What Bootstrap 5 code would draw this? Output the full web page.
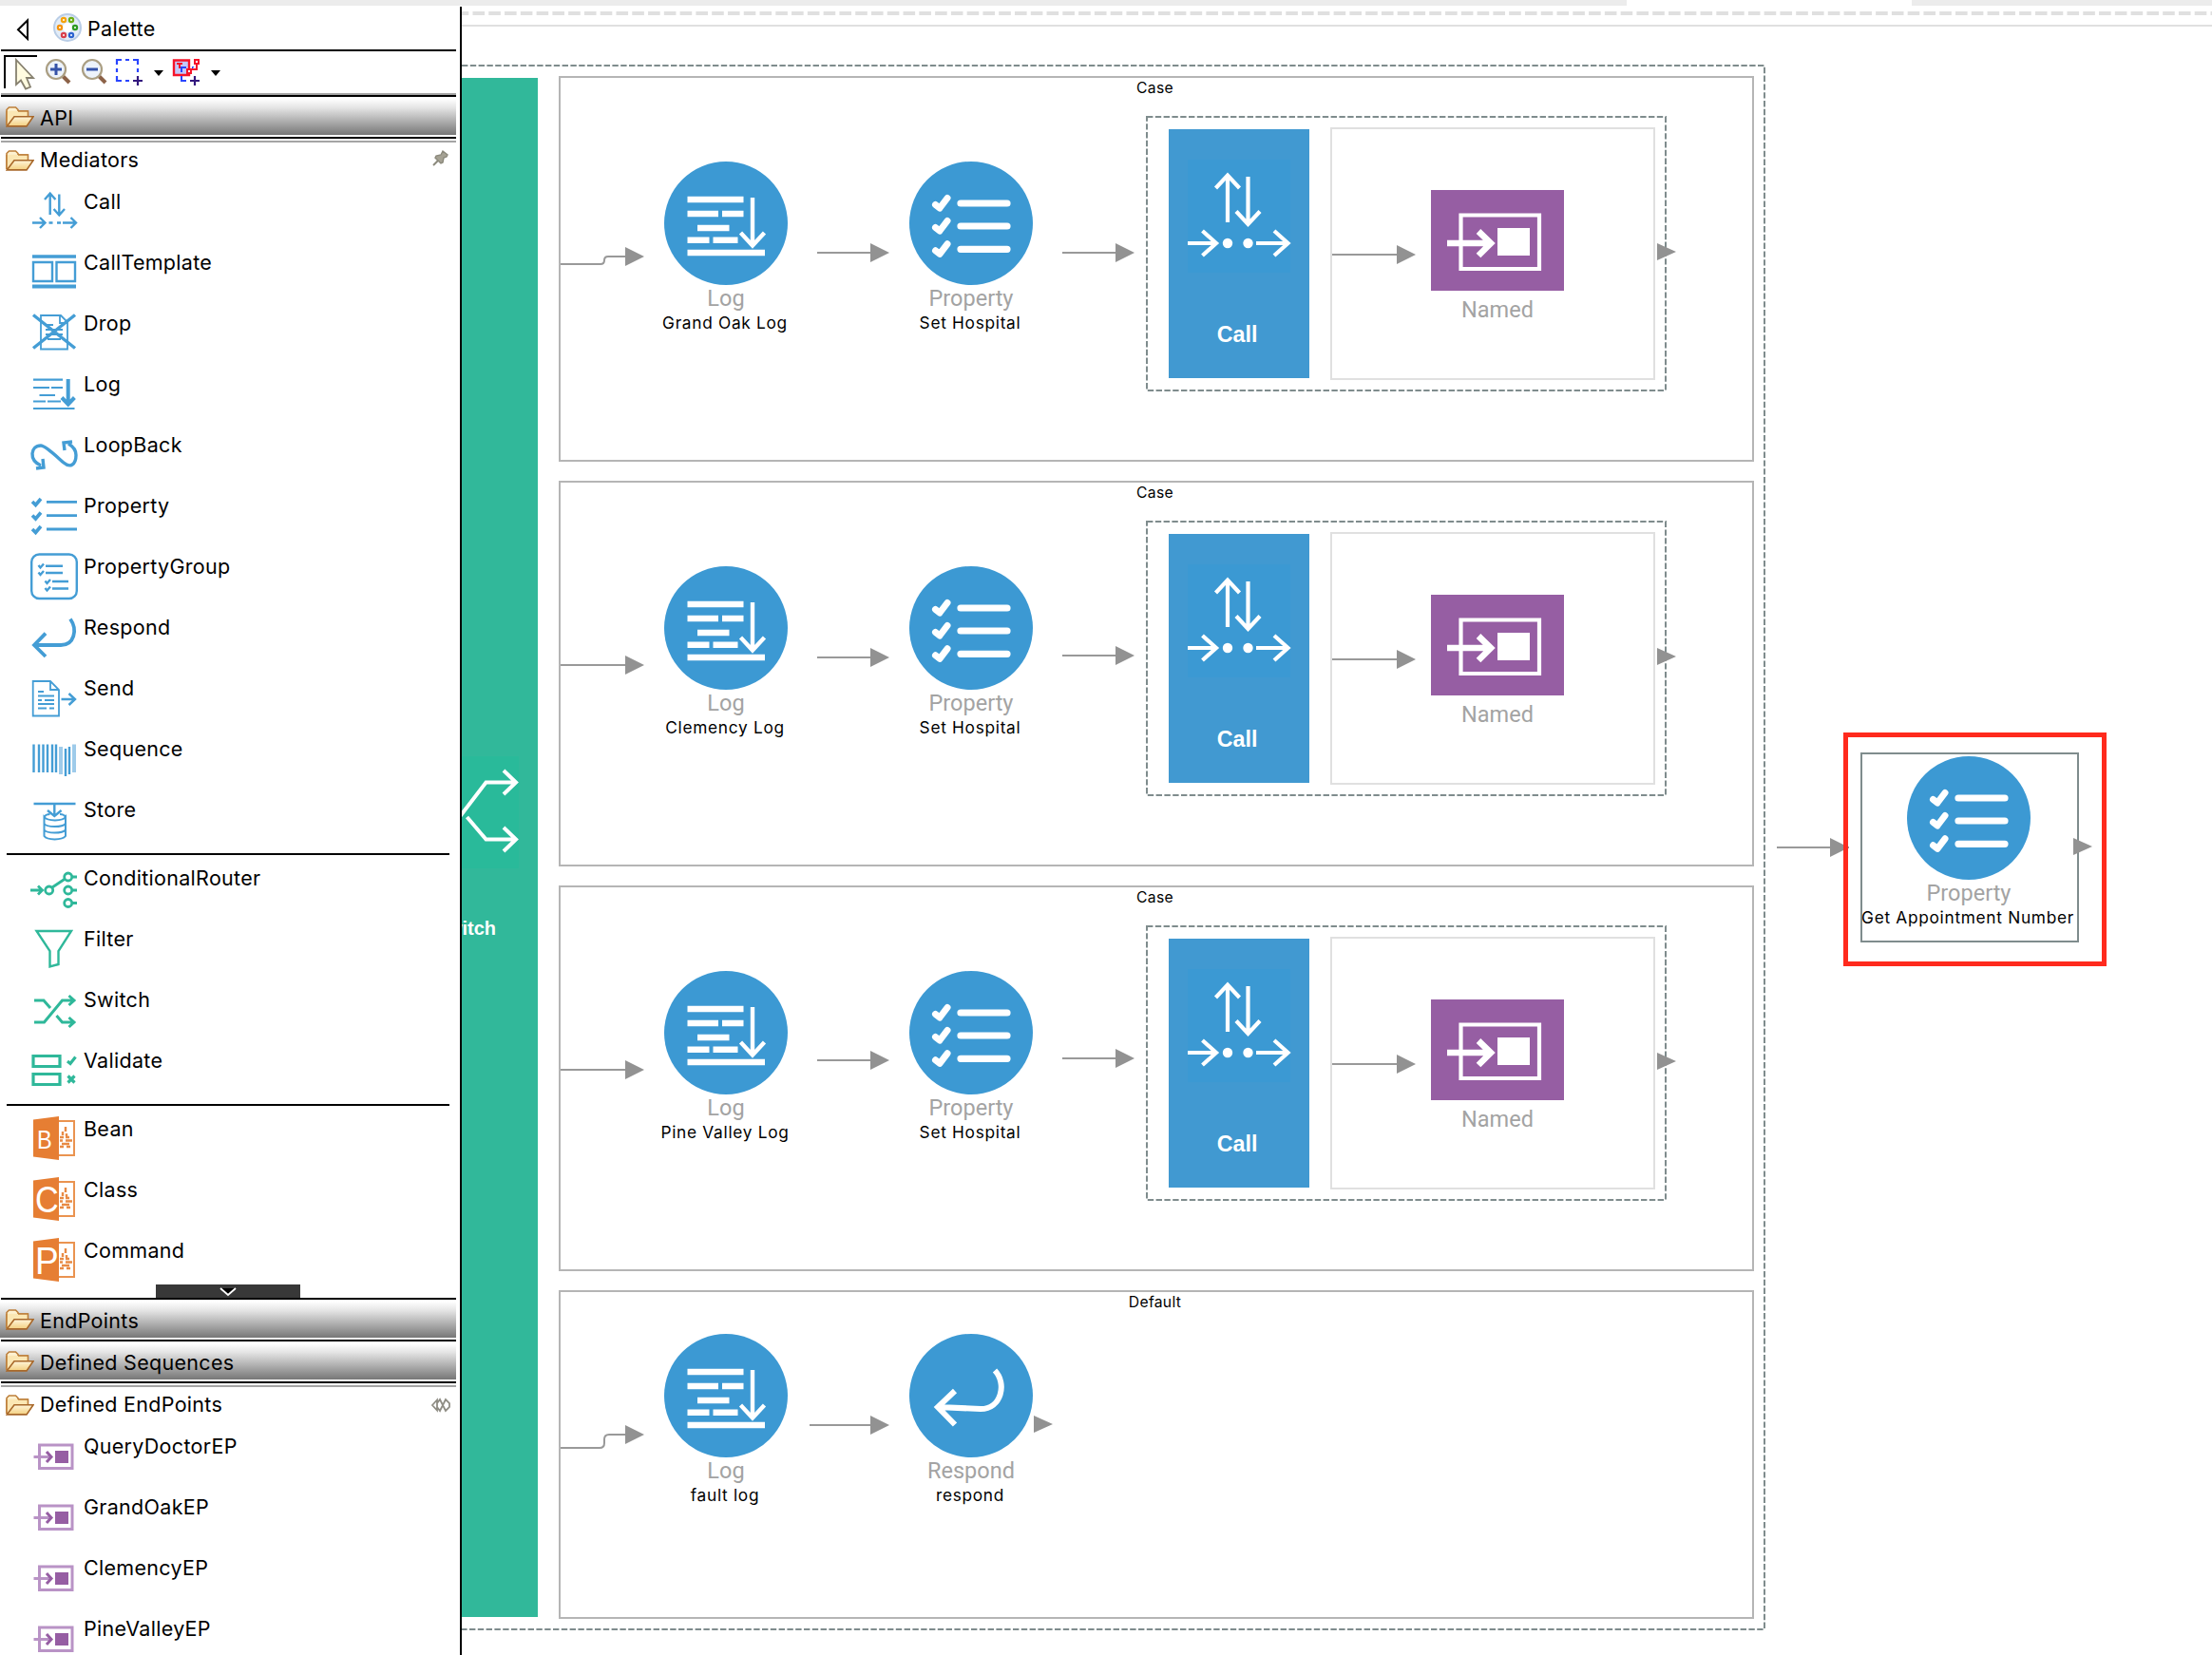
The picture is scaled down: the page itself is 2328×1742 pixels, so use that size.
<!DOCTYPE html>
<html lang="en">
<head>
<meta charset="utf-8">
<title>Mediation flow editor</title>
<link href="https://cdn.jsdelivr.net/npm/bootstrap@5.3.0/dist/css/bootstrap.min.css" rel="stylesheet">
<style>
body{width:2328px;height:1742px;overflow:hidden;background:#fff;color:#000;font-family:Inter,"Liberation Sans",sans-serif}
svg{display:block;flex:none;overflow:visible}
.top-strip{height:6px;flex:none}
.strip-a{width:1712px;background:#ececec}.strip-b{width:316px;background:#ececec}
.palette{width:486px;border-right:2px solid #000;background:#fff;font-size:21.5px;line-height:26px;letter-spacing:.3px;z-index:3;flex:none;margin-top:1px}
.pal-inner{width:480px}
.pal-title{height:45px;padding-left:0}
.rule-k{height:2px;background:#000;margin-left:1px;flex:none}
.rule-g{height:2px;background:#a5a5a5;margin-left:1px;flex:none}
.rule-k + .rule-g{margin-top:2px}
.tools{height:44px}
.drawer-bar{height:38px;margin:2px 0;background:linear-gradient(#fff,#e4e4e4 25%,#777);padding-left:6px}
.drawer-head{height:44px;padding-left:6px}
.drawer-head > svg:first-child{margin-top:-6px}
.drawer-label{margin-left:6px}
.drawer-bar .drawer-label{margin-top:1px}
.drawer-head .drawer-label{margin-top:-8px}
.pin-icon{margin:-10px 7px 0 0}
.tack-icon{margin:-7px 6px 0 0}
.pal-item{height:64px;padding-left:32px}
.pal-item svg{width:50px;height:50px;margin-top:4px}
.pal-item span{margin:5px 0 0 6px}
.sep{height:2px;background:#000;margin:0 7px 6px}
.drawer-body{height:1216px;overflow:hidden}
.more{width:152px;height:14px;background:#383838;left:164px;bottom:0}
.ic{fill:none;stroke:#449dd5;stroke-width:2.4}
.icg{fill:none;stroke:#2fb89a;stroke-width:2.8}
.icp{fill:none;stroke:#b993c6;stroke-width:3}
.canvas-area{flex:1;z-index:1}
.switch-box{left:-20px;top:62px;width:1392px;height:1648px}
.switch-bar{width:100px;height:1620px;margin-top:14px;background:#31b89a;margin-left:0}
.switch-name{font:bold 20px "Liberation Sans",sans-serif;color:#fff;right:44px;top:883px;line-height:24px}
.case-col{margin:12px 0 0 22px;gap:20px}
.branch{width:1258px;height:406px;border:2px solid #b5b5b5}
.branch.last{height:346px}
.branch-title{font-size:15.7px;line-height:20px;letter-spacing:.3px;top:1px;left:0;right:3px;text-align:center}
.node{width:240px;text-align:center}
.node .cap{font:23.5px/24px Roboto,sans-serif;color:#a3a3a3;margin-top:2px}
.node .nm{font-size:17.3px;line-height:20px;letter-spacing:.7px;margin:4px 2px 0 0;white-space:nowrap}
.node svg{width:130px;height:130px;margin:0 auto}
.n1{left:54px}.n2{left:312px}.nodes{top:88px}.last .nodes{top:44px}
.call-group{left:616px;top:40px;width:548px;height:290px;padding:14px 0 0 24px}
.call-bar{width:148px;height:262px;background:#4199d1}
.call-bar b{font:bold 23.3px/26px "Liberation Sans",sans-serif;color:#fff;display:block;text-align:center;margin:23px 4px 0 0}
.ep-box{width:342px;height:266px;border:2px solid #e0e0e0;margin:-2px 0 0 22px;padding:64px 0 0 104px}
.ep-box svg{width:140px;height:106px}
.ep-box .cap{font:23.5px/24px Roboto,sans-serif;color:#a3a3a3;width:140px;text-align:center;margin-top:8px}
.frame-svg,.wires{left:0;top:0;pointer-events:none}
.dash{fill:none;stroke:#7f8c8d;stroke-width:2;stroke-dasharray:6.4 2.4}
.wire{fill:none;stroke:#999;stroke-width:2}
.head{fill:#929292}
.mark-red{left:1454px;top:765px;width:277px;height:246px;border:5px solid #ff2a1d}
.picked{left:1472px;top:786px;width:230px;height:200px;border:2px solid #7f8c8d}
.picked .node{left:-8px;top:2px}
</style>
<script src="https://cdn.jsdelivr.net/npm/bootstrap@5.3.0/dist/js/bootstrap.bundle.min.js"></script>
</head>
<body class="d-flex flex-column">
<svg width="0" height="0" class="position-absolute">
<defs>
<linearGradient id="fg" x1="0" y1="0" x2="0" y2="1"><stop offset="0" stop-color="#fff6dc"/><stop offset="1" stop-color="#f3cf7e"/></linearGradient>
<symbol id="folder" viewBox="0 0 30 22"><path d="M1 20V3.500L3.500 1h7L13 3.500V5h10v5" fill="url(#fg)" stroke="#bd7f3a" stroke-width="1.600"/><path d="M1 21V5h22v6l-8 10z" fill="#fbe7b4"/><path d="M1 20V5M13 5h10.500v5.500" fill="none" stroke="#bd7f3a" stroke-width="1.600"/><path d="M1.200 20.900L9 10.700h20L22 20.900z" fill="url(#fg)" stroke="#a8682a" stroke-width="1.600"/></symbol>
<symbol id="ep" viewBox="0 0 50 50"><g class="icp"><rect x="9.500" y="13" width="34.500" height="24.500"/><path d="M3.500 25.500H22"/><path d="M17 20l5 5.500-5 5.500" stroke="#965ea3"/></g><path d="M26 19h14v13H26z" fill="#965ea3"/></symbol>
<symbol id="office" viewBox="0 0 50 50"><path d="M30 6h16v36H30" fill="none" stroke="#ea9350" stroke-width="2"/><path d="M37 12v5M34 17v4m4-2v3M31 23h4m2 0h4M31 26.500h3m3 0h7M33 30h8M31 33h4m3 0h4" fill="none" stroke="#e88a44" stroke-width="2.400"/><path d="M3 4.500L30 1v46L3 43.500z" fill="#e67e33"/></symbol>
<symbol id="n-log" viewBox="0 0 130 130"><circle cx="65" cy="65" r="65" fill="#3c99d3"/><path d="M24.500 40H83.500M24.500 55H57M61 55H83.500M35 70H68.500M24.500 82.700H47.500M51.500 82.700H77.500M24.500 96H106" stroke="#fff" stroke-width="6.600"/><path d="M93 38V88M80.500 75L93 88.500 105.500 75" fill="none" stroke="#fff" stroke-width="4.400"/></symbol>
<symbol id="n-prop" viewBox="0 0 130 130"><circle cx="65" cy="65" r="65" fill="#3c99d3"/><path d="M54 44h49M54 68h49M54 92.300h49" stroke="#fff" stroke-width="7.200" stroke-linecap="round"/><path d="M27.500 45.500l4.500 3.500 8-10.500M27.500 69.500l4.500 3.500 8-10.500M27.500 93.800l4.500 3.500 8-10.500" fill="none" stroke="#fff" stroke-width="7" stroke-linecap="round" stroke-linejoin="round"/></symbol>
<symbol id="n-resp" viewBox="0 0 130 130"><circle cx="65" cy="65" r="65" fill="#3c99d3"/><path d="M90 38.500C103 52 97 79 75 79L30 77M48 60L30 77 48 95.500" fill="none" stroke="#fff" stroke-width="6"/></symbol>
<symbol id="n-ep" viewBox="0 0 140 106"><path d="M0 0h140v106H0z" fill="#965ea3"/><path d="M31.500 26.500h82.500v56.500H31.500z" fill="none" stroke="#fff" stroke-width="4.200"/><path d="M17 56h46M50 43.500L63 56 50 69" fill="none" stroke="#fff" stroke-width="6.600"/><path d="M70 40h34v29H70z" fill="#fff"/></symbol>
<symbol id="n-call" viewBox="0 0 148 180"><path d="M20 32h108v119H20z" fill="#3b99d3"/><g fill="none" stroke="#fff" stroke-width="4.200"><path d="M62 98V48M49.500 62L62 48.500 74.500 62M83.500 50V99M71 86.500L83.500 100 96 86.500M20 120H50M35.500 107L50 120 35.500 133M92 120h34M111 107l14.500 13L111 133"/></g><circle cx="62" cy="120" r="5.200" fill="#fff"/><circle cx="83.500" cy="120" r="5.200" fill="#fff"/></symbol>
</defs>
</svg>

<div class="top-strip d-flex justify-content-between"><div class="strip-a"></div><div class="strip-b"></div></div>
<div class="d-flex flex-grow-1 position-relative">

<aside class="palette"><div class="pal-inner">
  <div class="pal-title d-flex align-items-center">
    <svg width="92" height="45" viewBox="0 7 92 45"><path d="M29 21.500V41L19 31.300z" fill="none" stroke="#000" stroke-width="2"/>
      <circle cx="71" cy="29" r="14" fill="#e3ecf7" stroke="#b9cde6" stroke-width="2"/><circle cx="71" cy="29" r="5" fill="#fff"/>
      <g fill="#fff" stroke-width="2.200"><circle cx="67" cy="21" r="2.100" stroke="#f5a30a"/><circle cx="75" cy="21" r="2.100" stroke="#6aae14"/><circle cx="63" cy="29" r="2.100" stroke="#f5930a"/><circle cx="79" cy="29" r="2.100" stroke="#2c9a22"/><circle cx="67" cy="37" r="2.100" stroke="#d8404c"/><circle cx="75" cy="37" r="2.100" stroke="#2b63d0"/></g></svg>
    <span>Palette</span>
  </div>
  <div class="rule-k"></div>
  <div class="tools d-flex">
    <svg width="44" height="44" viewBox="0 54 44 44"><path d="M39 59H5v34" fill="none" stroke="#000" stroke-width="2"/><path d="M17 63v26l5-4.500 5 9 5-2-4-9.500h7z" fill="#fffbe0" stroke="#86806f" stroke-width="1.800"/></svg>
    <svg width="38" height="44" viewBox="44 54 38 44"><path d="M66 80l7 7" stroke="#8c6248" stroke-width="4"/><circle cx="59" cy="73" r="10" fill="#edf3fb" stroke="#ab9f83" stroke-width="2.200"/><path d="M53 73h12M59 67v12" stroke="#3553a8" stroke-width="3"/></svg>
    <svg width="38" height="44" viewBox="82 54 38 44"><path d="M104 80l7 7" stroke="#8c6248" stroke-width="4"/><circle cx="97" cy="73" r="10" fill="#edf3fb" stroke="#ab9f83" stroke-width="2.200"/><path d="M91 73h12" stroke="#3553a8" stroke-width="3"/></svg>
    <svg width="60" height="44" viewBox="120 54 60 44"><path d="M123 68v-5h5M132 63h4M140 63h5v5M145 72v4M123 72v4M123 80v5h5M132 85h4" fill="none" stroke="#2945ff" stroke-width="2.200"/><path d="M140 85h10M145 80v10" stroke="#33187e" stroke-width="2.200"/><path d="M162 74h10l-5 6z"/></svg>
    <svg width="60" height="44" viewBox="180 54 60 44"><path d="M183 63.500h16V79h-16z" fill="#c3c8fa" stroke="#f5142a" stroke-width="2.400"/><path d="M186 67h6M189 67v5" stroke="#f5142a" stroke-width="2"/><path d="M191 76v-5h5M191 80v5h5M202 71h4" fill="none" stroke="#2945ff" stroke-width="2"/><path d="M197 73h4v4h-4zM205 63h4v4h-4zM207 67v6h-5" fill="#fff" stroke="#f5142a" stroke-width="2"/><path d="M200 85h10M205 80v10" stroke="#33187e" stroke-width="2.200"/><path d="M222 74h10l-5 6z"/></svg>
  </div>
  <div class="rule-g"></div><div class="rule-k"></div>
  <div class="drawer-bar d-flex align-items-center"><svg width="30" height="22"><use href="#folder"/></svg><span class="drawer-label">API</span></div>
  <div class="rule-k"></div><div class="rule-g"></div>
  <div class="position-relative">
  <div class="drawer-body">
    <div class="drawer-head d-flex align-items-center"><svg width="30" height="22"><use href="#folder"/></svg><span class="drawer-label">Mediators</span>
      <svg class="pin-icon ms-auto" width="18" height="18" viewBox="0 0 18 18"><path d="M1 16l6-6" stroke="#8b897c" stroke-width="2"/><path d="M11 1l5 4-1 2-3 1-1 5-2 1-6-6 1-2 5-1z" fill="#a5a294" stroke="#8b897c" stroke-width="1.400"/></svg></div>
    <div class="pal-item d-flex align-items-start"><svg class="ic" viewBox="0 0 50 50"><path d="M20.700 28V6M15 12l5.700-6.500L26.400 12M30.300 6.500V28M24.600 22l5.700 6.500L36 22M2 36.500H15M10 31l5.500 5.500L10 42M34 36.500h14M42.500 31l5.500 5.500-5.500 5.500M19.500 36.500h4M28 36.500h4"/></svg><span>Call</span></div>
    <div class="pal-item d-flex align-items-start"><svg class="ic" viewBox="0 0 50 50"><path d="M2 8h46" stroke-width="3.500"/><path d="M3 14h20v20H3zM27.500 14H47v20H27.500z"/><path d="M2 39.500h46" stroke-width="4"/></svg><span>CallTemplate</span></div>
    <div class="pal-item d-flex align-items-start"><svg class="ic" viewBox="0 0 50 50"><path d="M11 6h21l7 7v28.500H11zM31 6v8h8M16 16h8M16 21h18M16 26h18M18 31h14" stroke-width="1.800"/><path d="M3 5.500l44 35M47 5.500l-44 35" stroke-width="3.400"/></svg><span>Drop</span></div>
    <div class="pal-item d-flex align-items-start"><svg class="ic" viewBox="0 0 50 50"><path d="M3 9.600H34M3 18H20M22 18H34M9.500 26H26M3 32.500H16M18 32.500H32M3 40H46.500" stroke-width="2.200"/><path d="M39.700 9v25M33 28.500l6.700 7 6.700-7" stroke-width="4"/></svg><span>Log</span></div>
    <div class="pal-item d-flex align-items-start"><svg class="ic" viewBox="0 0 50 50"><path d="M11 36C-2 30 0 15 11 15c5 0 17 12 24 18s13 2 13-8c0-5-3-9-8-12M6 39l8-1-1-9M36 20l-1-8 9-1" stroke-width="3.400"/></svg><span>LoopBack</span></div>
    <div class="pal-item d-flex align-items-start"><svg class="ic" viewBox="0 0 50 50"><path d="M17 10.300h32M17 24.600h32M17 39h32" stroke-width="2.800"/><path d="M2 10l3.500 3.500L11 7M2 24.500L5.500 28 11 21.500M2 39l3.500 3.500L11 36" stroke-width="3.600"/></svg><span>Property</span></div>
    <div class="pal-item d-flex align-items-start"><svg class="ic" viewBox="0 0 50 50"><rect x="1.200" y="1.500" width="47.600" height="46.500" rx="8"/><path d="M16 13.700h18M16 21h18M23 30h17M23 37.500h17M8.500 13l2 2.500 3.500-4M8.500 20.500l2 2.500 3.500-4M15.500 29.500l2 2.500 3.500-4M15.500 37l2 2.500 3.500-4"/></svg><span>PropertyGroup</span></div>
    <div class="pal-item d-flex align-items-start"><svg class="ic" viewBox="0 0 50 50"><path d="M42 5.500C50 17 46 33 32 33H4M16 20.600L4 33l12 12" stroke-width="3.800"/></svg><span>Respond</span></div>
    <div class="pal-item d-flex align-items-start"><svg class="ic" viewBox="0 0 50 50"><path d="M2.700 7H21l9 9v27.500H2.700zM21 7v9h9M8 18h6M8 22.500h17M8 27h4m3 0h10M8 31h17M8 35.500h9m3 0h5" stroke-width="1.800"/><path d="M32.500 26h14M40.500 20l6.500 6-6.500 6"/></svg><span>Send</span></div>
    <div class="pal-item d-flex align-items-start"><svg class="ic" viewBox="0 0 50 50"><path d="M3.500 9.500V39M9 9.500V39M13.500 9.500V39M18 9.500V39M23 9.500V39M27 9.500V39M37 14v29M41 12v29"/><path d="M32 12v29M46 9.500V39" stroke="#9ecbea" stroke-width="4"/></svg><span>Sequence</span></div>
    <div class="pal-item d-flex align-items-start"><svg class="ic" viewBox="0 0 50 50"><path d="M3.500 8h44M25.300 8v12M18 15l7.300 6 7.300-6"/><path d="M14.500 22v20c3 4.500 19 4.500 22.500 0V22c-3 4.500-19 4.500-22.500 0zM14.500 22c1-2 4-3 6-3M37 22c-1-2-4-3-6-3M14.500 29c3 4 19 4 22.500 0M14.500 35.500c3 4 19 4 22.500 0" stroke-width="2"/></svg><span>Store</span></div>
    <div class="sep"></div>
    <div class="pal-item d-flex align-items-start"><svg class="icg" viewBox="0 0 50 50"><circle cx="39.700" cy="13" r="4"/><circle cx="39.700" cy="27" r="4"/><circle cx="39.700" cy="40.500" r="4"/><circle cx="19.700" cy="27" r="4"/><path d="M23 24l13.500-9M44 13h5M44 27h5M44 40.500h5M0 27h12M8 22.500l4.500 4.500L8 31.500"/></svg><span>ConditionalRouter</span></div>
    <div class="pal-item d-flex align-items-start"><svg class="icg" viewBox="0 0 50 50"><path d="M6.500 6h36.500L29.500 27v14l-9 2.500V27z" stroke-width="2.400"/></svg><span>Filter</span></div>
    <div class="pal-item d-flex align-items-start"><svg class="icg" viewBox="0 0 50 50"><path d="M4 15h10l7 8M27.500 31l6 7H45M4 38h10.500L33.500 15H45M40.500 10l5.500 5-5.500 5M40.500 33l5.500 5-5.500 5" stroke-width="3"/></svg><span>Switch</span></div>
    <div class="pal-item d-flex align-items-start"><svg class="icg" viewBox="0 0 50 50"><path d="M3 9.500h28v11H3zM3 28.500h28v11H3zM39 15l3 2.500 5.500-7M39.500 30.500l7 7M46.500 30.500l-7 7" stroke-width="3.200"/></svg><span>Validate</span></div>
    <div class="sep"></div>
    <div class="pal-item d-flex align-items-start"><svg viewBox="0 0 50 50"><use href="#office"/><text x="7" y="35" font-size="28" fill="#fff" font-family="Liberation Sans" textLength="16" lengthAdjust="spacingAndGlyphs">B</text></svg><span>Bean</span></div>
    <div class="pal-item d-flex align-items-start"><svg viewBox="0 0 50 50"><use href="#office"/><text x="5" y="38" font-size="38" fill="#fff" font-family="Liberation Sans" textLength="25" lengthAdjust="spacingAndGlyphs">C</text></svg><span>Class</span></div>
    <div class="pal-item d-flex align-items-start"><svg viewBox="0 0 50 50"><use href="#office"/><text x="5" y="39" font-size="40" fill="#fff" font-family="Liberation Sans" textLength="25" lengthAdjust="spacingAndGlyphs">P</text></svg><span>Command</span></div>
  </div>
  <div class="more position-absolute"><svg width="152" height="14" viewBox="0 0 152 14"><path d="M68 4h16l-8 8z" fill="#000"/><path d="M68 4l8 7 8-7" fill="none" stroke="#fff" stroke-width="1.800"/></svg></div>
  </div>
  <div class="rule-k"></div>
  <div class="drawer-bar d-flex align-items-center"><svg width="30" height="22"><use href="#folder"/></svg><span class="drawer-label">EndPoints</span></div>
  <div class="rule-k"></div>
  <div class="drawer-bar d-flex align-items-center"><svg width="30" height="22"><use href="#folder"/></svg><span class="drawer-label">Defined Sequences</span></div>
  <div class="rule-k"></div><div class="rule-g"></div>
  <div class="drawer-head d-flex align-items-center"><svg width="30" height="22"><use href="#folder"/></svg><span class="drawer-label">Defined EndPoints</span>
    <svg class="tack-icon ms-auto" width="20" height="14" viewBox="0 0 20 14"><path d="M1 7l5-5.500v11zM6 5l3-4 6 12 4-4V5l-4-4-6 12-3-4" fill="none" stroke="#8f8d84" stroke-width="1.800"/></svg></div>
  <div class="pal-item d-flex align-items-start"><svg><use href="#ep"/></svg><span>QueryDoctorEP</span></div>
  <div class="pal-item d-flex align-items-start"><svg><use href="#ep"/></svg><span>GrandOakEP</span></div>
  <div class="pal-item d-flex align-items-start"><svg><use href="#ep"/></svg><span>ClemencyEP</span></div>
  <div class="pal-item d-flex align-items-start"><svg><use href="#ep"/></svg><span>PineValleyEP</span></div>
</div></aside>

<main class="canvas-area position-relative">
  <svg class="frame-svg position-absolute" width="1842" height="1736" viewBox="486 6 1842 1736">
    <path d="M486 14H2328" stroke="#e0e0e0" stroke-width="4" stroke-dasharray="12.600 4.180" stroke-dashoffset="5.300"/>
    <path d="M486 27H2328" stroke="#e0e0e0" stroke-width="2"/>
    <path class="dash" d="M486 69H1857V1715H486"/>
  </svg>
  <div class="switch-box position-absolute d-flex">
    <div class="switch-bar position-relative">
      <svg width="100" height="1620" viewBox="466 82 100 1620"><path d="M466 796h80v118h-80z" fill="#29ba9a"/><path d="M479 866l32.500-42.500H543M530 811l13 12.500L530 836M491.500 860l20 23.500H543M530 871l13 12.500-13 12.500" fill="none" stroke="#fff" stroke-width="4"/></svg>
      <div class="switch-name position-absolute">Switch</div>
    </div>
    <div class="case-col d-flex flex-column">
      <section class="branch position-relative">
        <div class="branch-title position-absolute">Case</div>
        <div class="node nodes n1 position-absolute"><svg><use href="#n-log"/></svg><div class="cap">Log</div><div class="nm">Grand Oak Log</div></div>
        <div class="node nodes n2 position-absolute"><svg><use href="#n-prop"/></svg><div class="cap">Property</div><div class="nm">Set Hospital</div></div>
        <div class="call-group position-absolute d-flex"><div class="call-bar"><svg width="148" height="180"><use href="#n-call"/></svg><b>Call</b></div><div class="ep-box"><svg><use href="#n-ep"/></svg><div class="cap">Named</div></div></div>
        <svg class="wires position-absolute" width="1254" height="402" viewBox="590 82 1254 402"><path class="dash" d="M1207 123H1753V411H1207z"/><path class="wire" d="M590 278H632q4 0 4-4t4-4H660M860 266H918M1118 266H1176M1402 268H1472"/><path class="head" d="M658 260l20 10-20 10zM916 256l20 10-20 10zM1174 256l20 10-20 10zM1470 258l20 10-20 10zM1744 256l20 9-20 9z"/></svg>
      </section>
      <section class="branch position-relative">
        <div class="branch-title position-absolute">Case</div>
        <div class="node nodes n1 position-absolute"><svg><use href="#n-log"/></svg><div class="cap">Log</div><div class="nm">Clemency Log</div></div>
        <div class="node nodes n2 position-absolute"><svg><use href="#n-prop"/></svg><div class="cap">Property</div><div class="nm">Set Hospital</div></div>
        <div class="call-group position-absolute d-flex"><div class="call-bar"><svg width="148" height="180"><use href="#n-call"/></svg><b>Call</b></div><div class="ep-box"><svg><use href="#n-ep"/></svg><div class="cap">Named</div></div></div>
        <svg class="wires position-absolute" width="1254" height="402" viewBox="590 82 1254 402"><path class="dash" d="M1207 123H1753V411H1207z"/><path class="wire" d="M590 274H660M860 266H918M1118 264H1176M1402 268H1472"/><path class="head" d="M658 264l20 10-20 10zM916 256l20 10-20 10zM1174 254l20 10-20 10zM1470 258l20 10-20 10zM1744 256l20 9-20 9z"/></svg>
      </section>
      <section class="branch position-relative">
        <div class="branch-title position-absolute">Case</div>
        <div class="node nodes n1 position-absolute"><svg><use href="#n-log"/></svg><div class="cap">Log</div><div class="nm">Pine Valley Log</div></div>
        <div class="node nodes n2 position-absolute"><svg><use href="#n-prop"/></svg><div class="cap">Property</div><div class="nm">Set Hospital</div></div>
        <div class="call-group position-absolute d-flex"><div class="call-bar"><svg width="148" height="180"><use href="#n-call"/></svg><b>Call</b></div><div class="ep-box"><svg><use href="#n-ep"/></svg><div class="cap">Named</div></div></div>
        <svg class="wires position-absolute" width="1254" height="402" viewBox="590 82 1254 402"><path class="dash" d="M1207 123H1753V411H1207z"/><path class="wire" d="M590 274H660M860 264H918M1118 262H1176M1402 268H1472"/><path class="head" d="M658 264l20 10-20 10zM916 254l20 10-20 10zM1174 252l20 10-20 10zM1470 258l20 10-20 10zM1744 256l20 9-20 9z"/></svg>
      </section>
      <section class="branch last position-relative">
        <div class="branch-title position-absolute">Default</div>
        <div class="node nodes n1 position-absolute"><svg><use href="#n-log"/></svg><div class="cap">Log</div><div class="nm">fault log</div></div>
        <div class="node nodes n2 position-absolute"><svg><use href="#n-resp"/></svg><div class="cap">Respond</div><div class="nm">respond</div></div>
        <svg class="wires position-absolute" width="1254" height="342" viewBox="590 1360 1254 342"><path class="wire" d="M590 1524H631q5 0 5-5v-4q0-5 5-5H660M852 1500H918"/><path class="head" d="M658 1500l20 10-20 10zM916 1490l20 10-20 10zM1088 1490l20 9-20 9z"/></svg>
      </section>
    </div>
  </div>
  <svg class="wires position-absolute" width="1842" height="1736" viewBox="486 6 1842 1736"><path class="wire" d="M1870 892H1946"/><path class="head" d="M1926 882l20 10-20 10z"/></svg>
  <div class="mark-red position-absolute"></div>
  <div class="picked position-absolute"><div class="node position-absolute"><svg><use href="#n-prop"/></svg><div class="cap">Property</div><div class="nm">Get Appointment Number</div></div></div>
  <svg class="wires position-absolute" width="1842" height="1736" viewBox="486 6 1842 1736"><path class="head" d="M2182 882l20 9-20 9z"/></svg>
</main>
</div>
</body>
</html>
